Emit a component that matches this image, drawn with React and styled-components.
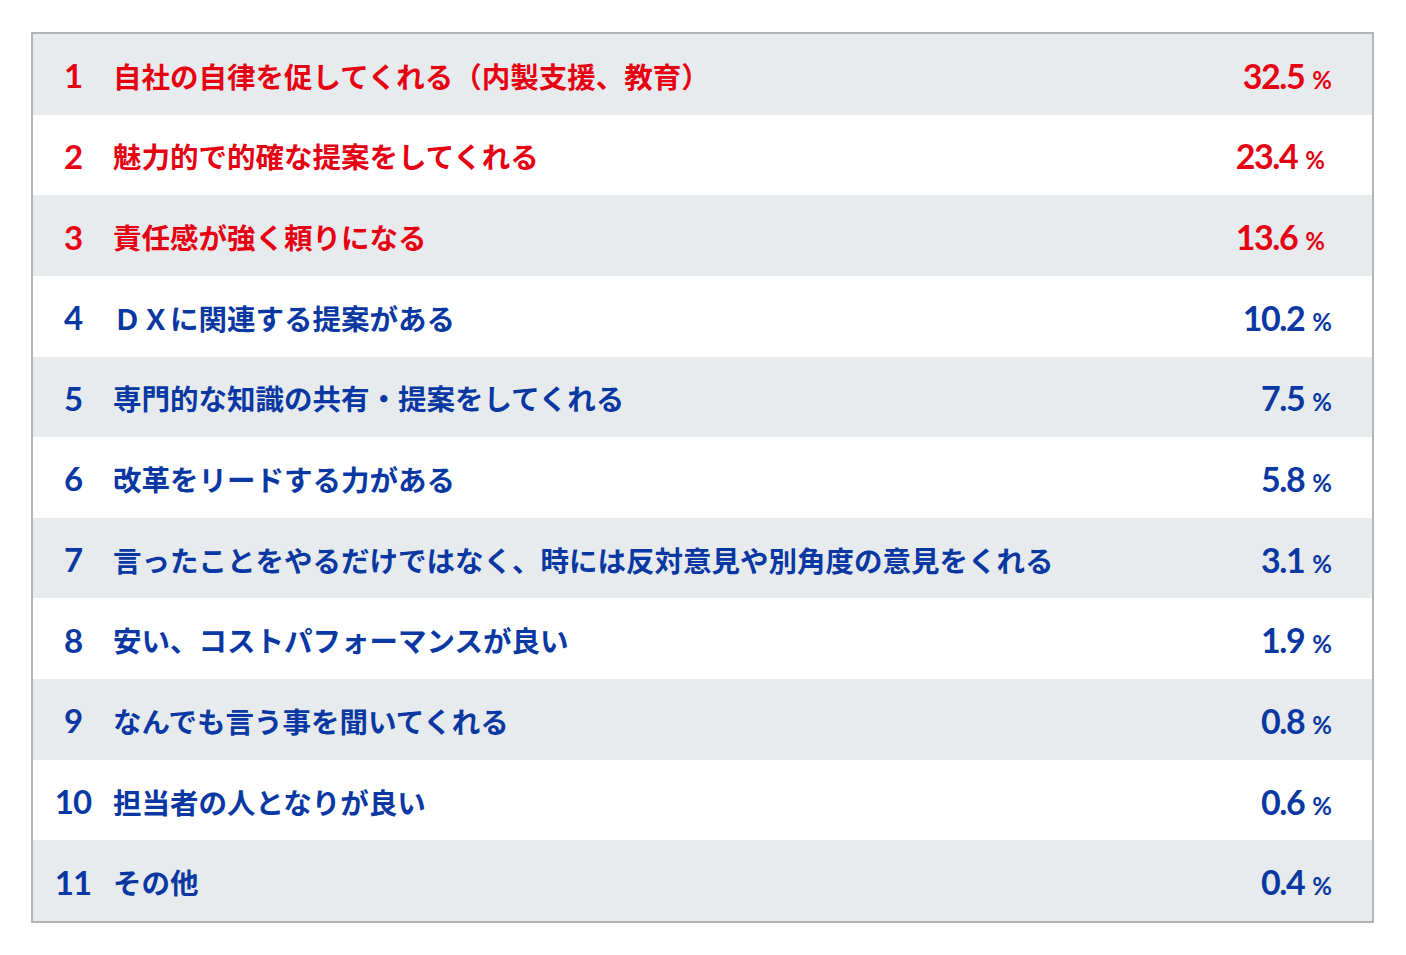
import styled, { createGlobalStyle } from 'styled-components';

const GlobalStyle = createGlobalStyle`
  html, body {
    margin: 0;
    padding: 0;
    background: #ffffff;
  }
  body {
    font-family: "Lato", "Noto Sans CJK JP", sans-serif;
  }
`;

const RED = '#e60012';
const BLUE = '#0a38a3';

const Page = styled.div`
  padding: 32px 0 0 31px;
`;

const Table = styled.div`
  box-sizing: border-box;
  width: 1343px;
  height: 891px;
  border: 2px solid #b4b4b4;
  display: grid;
  grid-template-rows: repeat(11, 1fr);
`;

const Row = styled.div`
  display: flex;
  align-items: center;
  padding-top: 2px;
  background: ${p => (p.$shade ? '#e8ebee' : '#ffffff')};
  color: ${p => (p.$top ? RED : BLUE)};
`;

const Rank = styled.div`
  width: 80px;
  flex: none;
  text-align: center;
  font-family: "Lato", sans-serif;
  font-weight: 700;
  font-size: 33px;
  letter-spacing: -1px;
`;

const Label = styled.div`
  flex: 1;
  font-family: "Noto Sans CJK JP", sans-serif;
  font-weight: 700;
  font-size: 28.5px;
  white-space: nowrap;
`;

const Value = styled.div`
  flex: none;
  display: flex;
  align-items: baseline;
  padding-right: ${p => (p.$nudge ? 47 : 40)}px;
  font-family: "Lato", sans-serif;
  font-weight: 700;
  font-size: 34px;
  letter-spacing: -1.4px;
`;

const Unit = styled.span`
  font-size: 24px;
  margin-left: 8px;
  letter-spacing: 0;
`;

const rows = [
  { text: '自社の自律を促してくれる（内製支援、教育）', value: '32.5' },
  { text: '魅力的で的確な提案をしてくれる', value: '23.4', nudge: true },
  { text: '責任感が強く頼りになる', value: '13.6', nudge: true },
  { text: 'ＤＸに関連する提案がある', value: '10.2' },
  { text: '専門的な知識の共有・提案をしてくれる', value: '7.5' },
  { text: '改革をリードする力がある', value: '5.8' },
  { text: '言ったことをやるだけではなく、時には反対意見や別角度の意見をくれる', value: '3.1' },
  { text: '安い、コストパフォーマンスが良い', value: '1.9' },
  { text: 'なんでも言う事を聞いてくれる', value: '0.8' },
  { text: '担当者の人となりが良い', value: '0.6' },
  { text: 'その他', value: '0.4' },
];

const App = () => (
  <Page>
    <GlobalStyle />
    <Table>
      {rows.map((r, i) => (
        <Row key={i} $shade={i % 2 === 0} $top={i < 3}>
          <Rank>{i + 1}</Rank>
          <Label>{r.text}</Label>
          <Value $nudge={r.nudge}>
            {r.value}
            <Unit>%</Unit>
          </Value>
        </Row>
      ))}
    </Table>
  </Page>
);

export default App;
